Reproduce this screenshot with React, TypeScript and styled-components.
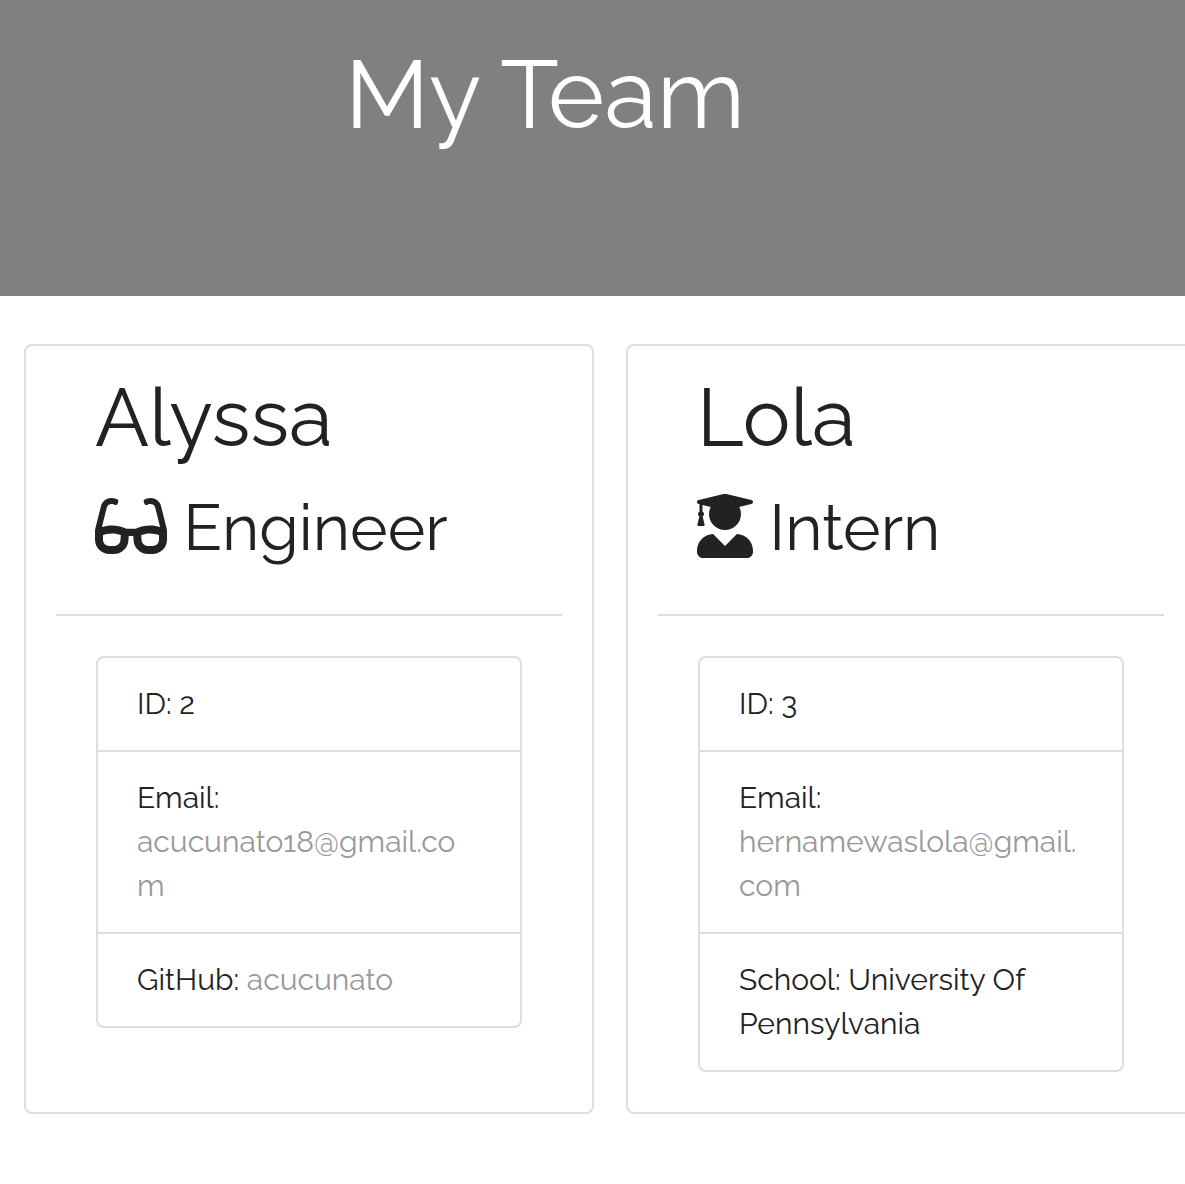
import React from "react";
import styled, { createGlobalStyle } from "styled-components";
import { FaGlasses, FaUserGraduate } from "react-icons/fa";
import type { IconType } from "react-icons";

const GlobalStyle = createGlobalStyle`
  *, *::before, *::after { box-sizing: border-box; }
  body {
    margin: 0;
    overflow-x: hidden;
    background: #fff;
    color: #222;
    font-family: Raleway, Lato, sans-serif;
    font-size: 30px;
    line-height: 44px;
  }
`;

const Banner = styled.header`
  padding: 36px 95px 144px 0;
  background: #808080;
  color: #fff;
  text-align: center;
`;

const Title = styled.h1`
  margin: 0;
  font-size: 96px;
  font-weight: 400;
  line-height: 116px;
`;

const Team = styled.main`
  display: grid;
  grid-template-columns: repeat(2, minmax(570px, 1fr));
  gap: 32px;
  padding: 48px 24px;
`;

const Card = styled.article`
  padding: 24px 30px 40px;
  border: 2px solid #dedede;
  border-radius: 8px;
`;

const CardHeader = styled.header`
  padding: 0 39px 40px;
  border-bottom: 2px solid #dedede;
`;

const Name = styled.h2`
  margin: 0 0 16px;
  font-size: 80px;
  font-weight: 400;
  line-height: 96px;
`;

const Role = styled.h3<{ $iconWidth: number }>`
  margin: 0;
  font-size: 64px;
  font-weight: 400;
  line-height: 92px;

  svg {
    width: ${({ $iconWidth }) => $iconWidth}px;
    height: 64px;
    vertical-align: -8px;
  }
`;

const Facts = styled.ul`
  margin: 40px 40px 0;
  padding: 0;
  list-style: none;
  border: 2px solid #dedede;
  border-radius: 8px;
`;

const Fact = styled.li`
  padding: 24px 39px;
  overflow-wrap: anywhere;

  & + & {
    border-top: 2px solid #dedede;
  }
`;

const Link = styled.a`
  color: #999;
  text-decoration: none;
`;

type Detail = { label: string; value: string; href?: string };
type Member = {
  name: string;
  role: string;
  icon: IconType;
  iconWidth: number;
  details: Detail[];
};

const members: Member[] = [
  {
    name: "Alyssa",
    role: "Engineer",
    icon: FaGlasses,
    iconWidth: 72,
    details: [
      { label: "ID", value: "2" },
      { label: "Email", value: "acucunato18@gmail.com", href: "mailto:acucunato18@gmail.com" },
      { label: "GitHub", value: "acucunato", href: "https://github.com/acucunato" },
    ],
  },
  {
    name: "Lola",
    role: "Intern",
    icon: FaUserGraduate,
    iconWidth: 56,
    details: [
      { label: "ID", value: "3" },
      { label: "Email", value: "hernamewaslola@gmail.com", href: "mailto:hernamewaslola@gmail.com" },
      { label: "School", value: "University Of Pennsylvania" },
    ],
  },
];

function MemberCard({ name, role, icon: Icon, iconWidth, details }: Member) {
  return (
    <Card>
      <CardHeader>
        <Name>{name}</Name>
        <Role $iconWidth={iconWidth}>
          <Icon aria-hidden />
          {` ${role}`}
        </Role>
      </CardHeader>
      <Facts>
        {details.map(({ label, value, href }) => (
          <Fact key={label}>
            {href ? `${label}: ` : `${label}: ${value}`}
            {href && <Link href={href}>{value}</Link>}
          </Fact>
        ))}
      </Facts>
    </Card>
  );
}

export default function App() {
  return (
    <>
      <GlobalStyle />
      <Banner>
        <Title>My Team</Title>
      </Banner>
      <Team>
        {members.map((member) => (
          <MemberCard key={member.name} {...member} />
        ))}
      </Team>
    </>
  );
}
